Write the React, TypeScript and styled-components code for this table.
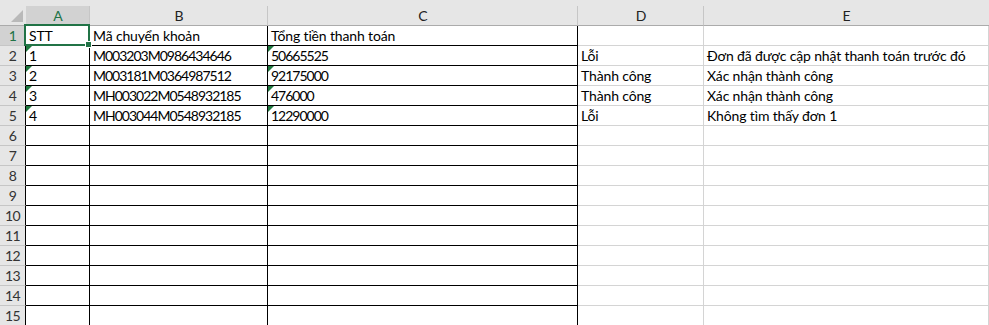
import React from 'react';
import { styled, createGlobalStyle } from "styled-components";

const GlobalStyle = createGlobalStyle`
    html, body {
        margin: 0;
        padding: 0;
        background: #ffffff;
        overflow: hidden;
    }
`;

const COLS = ['A', 'B', 'C', 'D', 'E'];
const ROW_COUNT = 15;
const GREEN = '#217346';

// cells keyed by row number, then column letter
const cells: Record<number, Record<string, string>> = {
    1: { A: 'STT', B: 'Mã chuyển khoản', C: 'Tổng tiền thanh toán' },
    2: { A: '1', B: 'M003203M0986434646', C: '50665525', D: 'Lỗi', E: 'Đơn đã được cập nhật thanh toán trước đó' },
    3: { A: '2', B: 'M003181M0364987512', C: '92175000', D: 'Thành công', E: 'Xác nhận thành công' },
    4: { A: '3', B: 'MH003022M0548932185', C: '476000', D: 'Thành công', E: 'Xác nhận thành công' },
    5: { A: '4', B: 'MH003044M0548932185', C: '12290000', D: 'Lỗi', E: 'Không tìm thấy đơn 1' },
};

// numbers stored as text get the little green flag
const flagged = (row: number, col: string) => row >= 2 && row <= 5 && (col === 'A' || col === 'C');
const bordered = (col: string) => col === 'A' || col === 'B' || col === 'C';
const isCode = (v: string) => /\d{3,}/.test(v);

const Sheet = styled.div`
    display: grid;
    grid-template-columns: 26px 64px 178px 310px 126px 1fr;
    grid-template-rows: 26px repeat(${ROW_COUNT}, 20px);
    width: 989px;
    height: 325px;
    overflow: hidden;
    font-family: Lato, "Open Sans", sans-serif;
    background: #ffffff;
`;

const Corner = styled.div`
    position: relative;
    background: #e6e6e6;
    border-bottom: 1px solid #ababab;
    &::after {
        content: '';
        position: absolute;
        right: 3px;
        bottom: 3px;
        width: 0;
        height: 0;
        border-left: 12px solid transparent;
        border-bottom: 12px solid #b9b9b9;
    }
`;

const ColHead = styled.div`
    display: flex;
    padding-top: 6px;
    background: #e6e6e6;
`;

const ColLabel = styled.div<{ $active?: boolean }>`
    flex: 1;
    display: flex;
    align-items: center;
    justify-content: center;
    background: ${p => p.$active ? '#d2d2d2' : '#e6e6e6'};
    border-left: 1px solid #c6c6c6;
    border-bottom: ${p => p.$active ? `2px solid ${GREEN}` : '1px solid #ababab'};
    margin-left: -1px;
    color: ${p => p.$active ? GREEN : '#222222'};
    font-size: 14px;
    box-sizing: border-box;
`;

const RowHead = styled.div<{ $active?: boolean }>`
    display: flex;
    align-items: flex-end;
    justify-content: center;
    padding-bottom: 1px;
    background: ${p => p.$active ? '#d2d2d2' : '#e6e6e6'};
    border-right: 1px solid #000000;
    border-bottom: 1px solid #c6c6c6;
    color: ${p => p.$active ? GREEN : '#333333'};
    font-size: 14px;
    letter-spacing: -0.6px;
    box-sizing: border-box;
`;

const Cell = styled.div<{ $line: boolean; $edge: boolean; $code: boolean }>`
    position: relative;
    display: flex;
    align-items: flex-end;
    padding: 0 3px 1px;
    border-right: 1px solid ${p => p.$edge ? '#000000' : '#d4d4d4'};
    border-bottom: 1px solid ${p => p.$line ? '#000000' : '#d4d4d4'};
    color: #000000;
    font-size: 14px;
    letter-spacing: ${p => p.$code ? '-1px' : '-0.15px'};
    white-space: nowrap;
    box-sizing: border-box;
    min-width: 0;
`;

const Flag = styled.span`
    position: absolute;
    left: 0;
    top: 0;
    width: 0;
    height: 0;
    border-top: 6px solid #1f7a3f;
    border-right: 6px solid transparent;
`;

const Selection = styled.span`
    position: absolute;
    left: -2px;
    top: -2px;
    right: -1px;
    bottom: -1px;
    border: 2px solid ${GREEN};
    pointer-events: none;
    z-index: 2;
    &::after {
        content: '';
        position: absolute;
        right: -4px;
        bottom: -4px;
        width: 5px;
        height: 5px;
        background: ${GREEN};
        border: 1px solid #ffffff;
    }
`;

export default function App() {
    const rows = Array.from({ length: ROW_COUNT }, (_, i) => i + 1);
    return <>
        <GlobalStyle />
        <Sheet>
            <Corner />
            {COLS.map(c => (
                <ColHead key={c}>
                    <ColLabel $active={c === 'A'}>{c}</ColLabel>
                </ColHead>
            ))}
            {rows.map(r => <React.Fragment key={r}>
                <RowHead $active={r === 1}>{r}</RowHead>
                {COLS.map(c => {
                    const value = cells[r]?.[c] ?? '';
                    return (
                        <Cell key={c} $line={bordered(c)} $edge={bordered(c)} $code={isCode(value)}>
                            {flagged(r, c) && <Flag />}
                            {r === 1 && c === 'A' && <Selection />}
                            {value}
                        </Cell>
                    );
                })}
            </React.Fragment>)}
        </Sheet>
    </>
}
